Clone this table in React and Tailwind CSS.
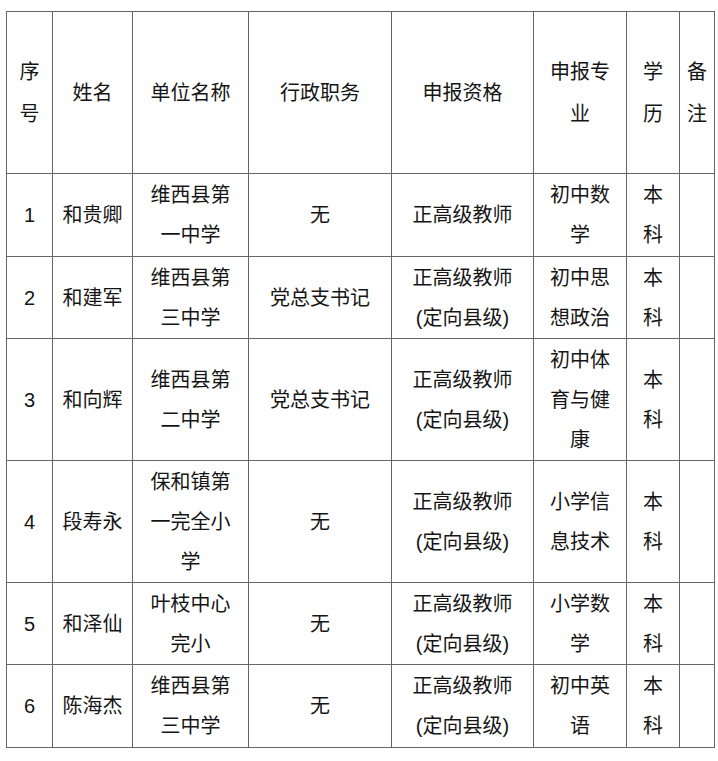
const HEAD = [['序', '号'], ['姓名'], ['单位名称'], ['行政职务'], ['申报资格'], ['申报专', '业'], ['学', '历'], ['备', '注']]

const ROWS = [
  { h: 'h-[83px]', cells: [['1'], ['和贵卿'], ['维西县第', '一中学'], ['无'], ['正高级教师'], ['初中数', '学'], ['本', '科'], []] },
  { h: 'h-[82px]', cells: [['2'], ['和建军'], ['维西县第', '三中学'], ['党总支书记'], ['正高级教师', '(定向县级)'], ['初中思', '想政治'], ['本', '科'], []] },
  { h: 'h-[122px]', cells: [['3'], ['和向辉'], ['维西县第', '二中学'], ['党总支书记'], ['正高级教师', '(定向县级)'], ['初中体', '育与健', '康'], ['本', '科'], []] },
  { h: 'h-[122px]', cells: [['4'], ['段寿永'], ['保和镇第', '一完全小', '学'], ['无'], ['正高级教师', '(定向县级)'], ['小学信', '息技术'], ['本', '科'], []] },
  { h: 'h-[82px]', cells: [['5'], ['和泽仙'], ['叶枝中心', '完小'], ['无'], ['正高级教师', '(定向县级)'], ['小学数', '学'], ['本', '科'], []] },
  { h: 'h-[83px]', cells: [['6'], ['陈海杰'], ['维西县第', '三中学'], ['无'], ['正高级教师', '(定向县级)'], ['初中英', '语'], ['本', '科'], []] },
]

const COLS = ['w-[46px]', 'w-[80px]', 'w-[116px]', 'w-[143px]', 'w-[142px]', 'w-[93px]', 'w-[53px]', 'w-[35px]']

function Lines({ lines }) {
  return lines.map((l, i) => <div key={i}>{l}</div>)
}

export default function App() {
  return (
    <div className="min-h-[761px] bg-white pt-[11px] pl-[6px] font-['Liberation_Sans','Noto_Sans_CJK_SC',sans-serif] text-[20px] text-[#151515]">
      <table className="table-fixed border-collapse w-[709px]">
        <colgroup>
          {COLS.map((c, i) => <col key={i} className={c} />)}
        </colgroup>
        <thead>
          <tr className="h-[162px] leading-[42px]">
            {HEAD.map((lines, i) => (
              <th key={i} className="border border-[#666] p-0 font-normal text-center align-middle">
                <Lines lines={lines} />
              </th>
            ))}
          </tr>
        </thead>
        <tbody className="leading-[40px]">
          {ROWS.map((r, ri) => (
            <tr key={ri} className={r.h}>
              {r.cells.map((lines, i) => (
                <td key={i} className="border border-[#666] p-0 text-center align-middle">
                  <Lines lines={lines} />
                </td>
              ))}
            </tr>
          ))}
        </tbody>
      </table>
    </div>
  )
}
